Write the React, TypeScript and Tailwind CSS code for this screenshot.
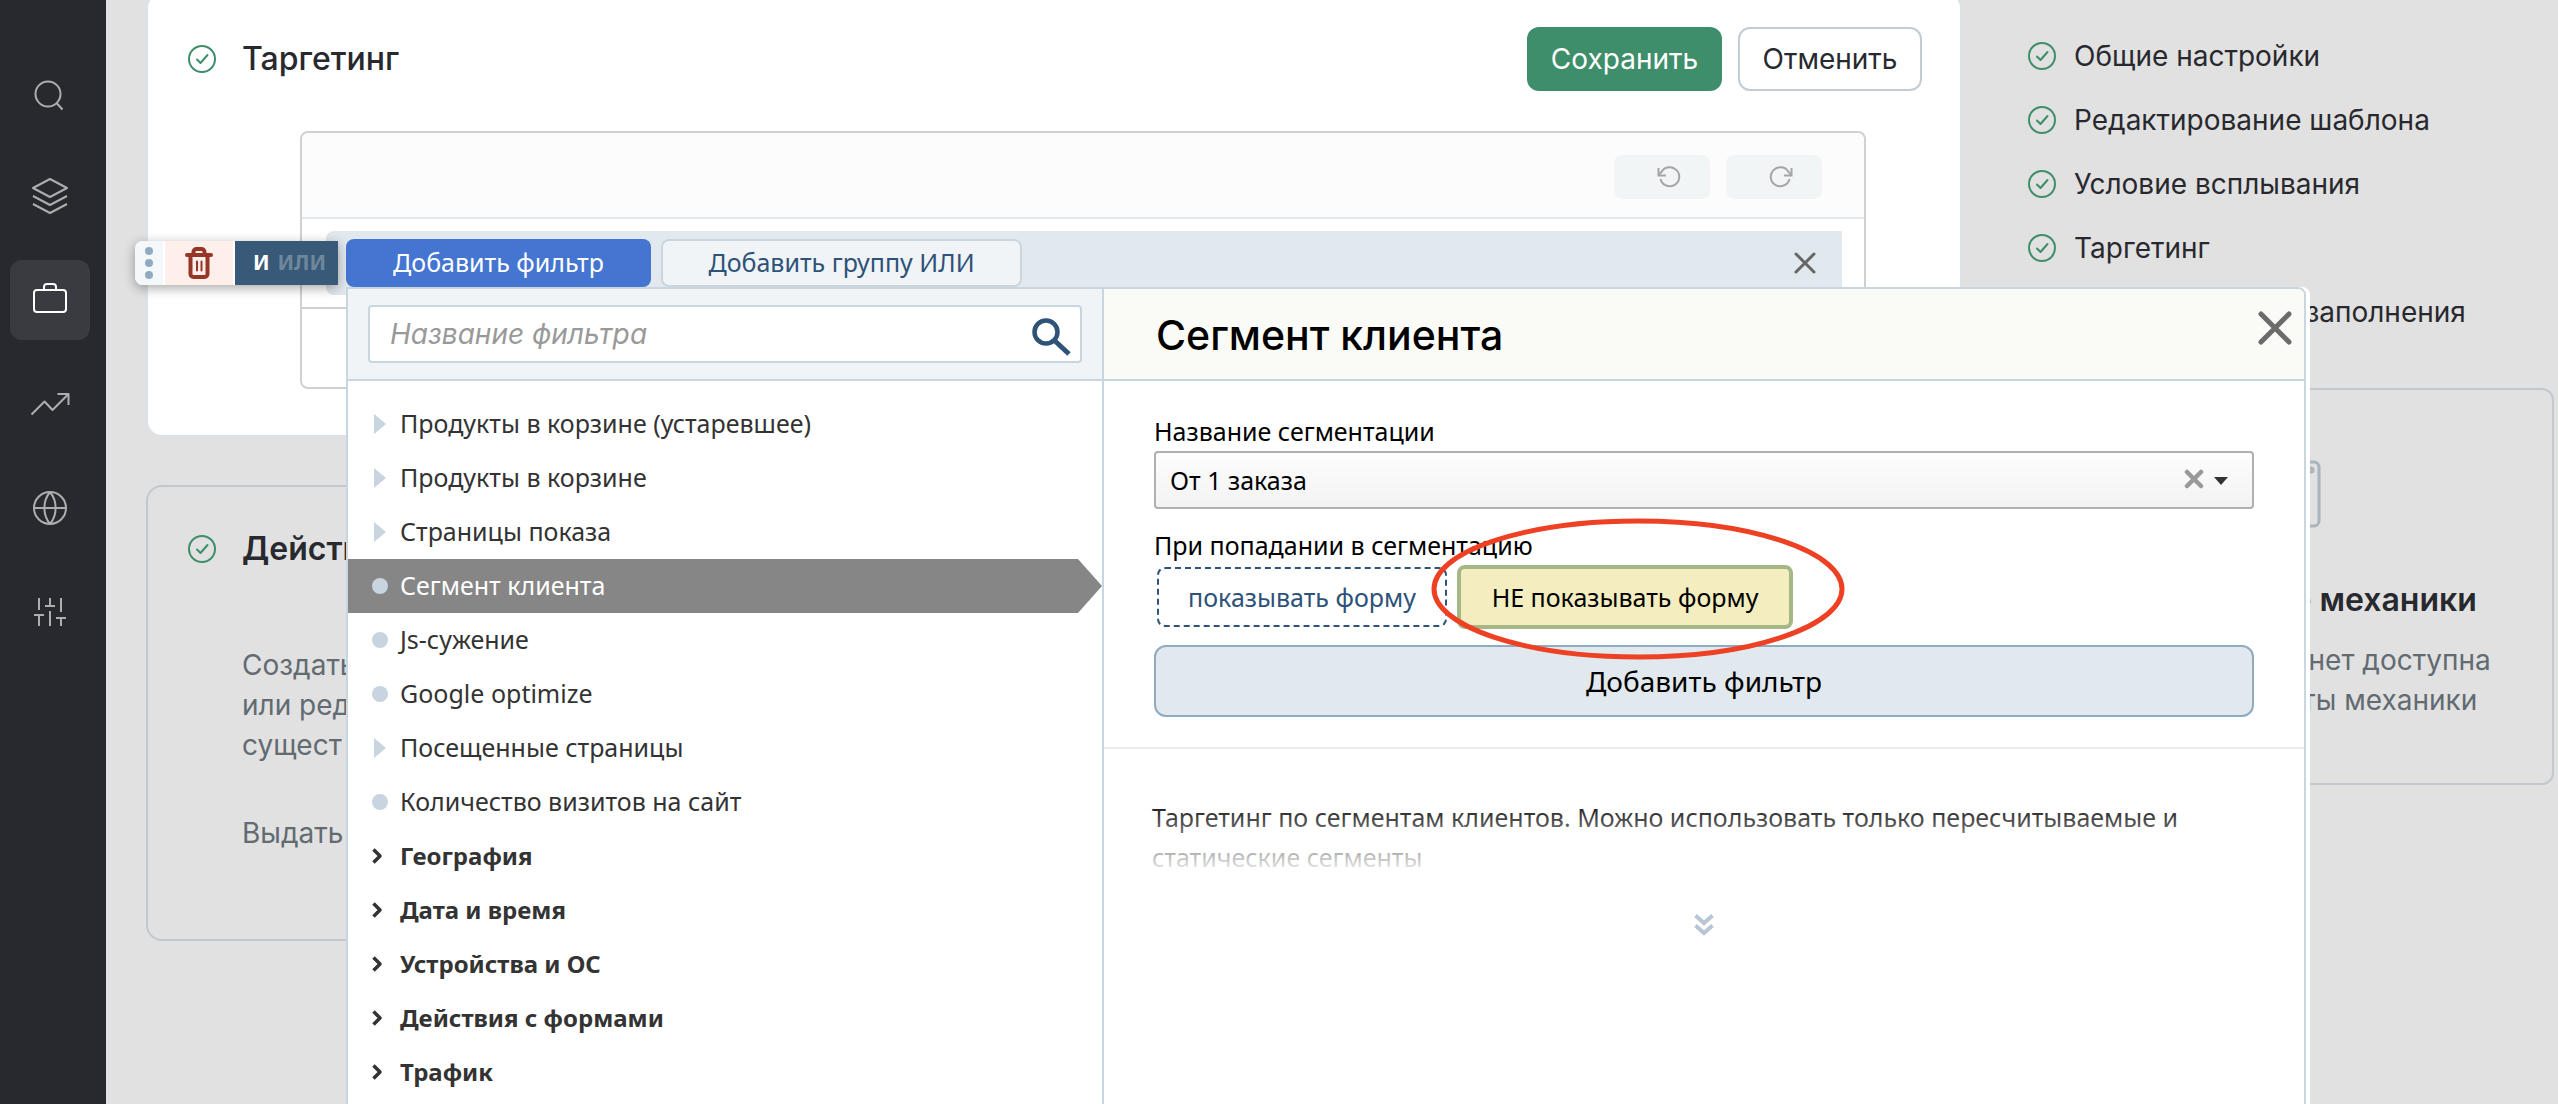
import React, { useState } from 'react';
import clsx from 'clsx';

type FilterItem = {
  title: string;
  kind: 'branch' | 'leaf' | 'group';
};

const filters: FilterItem[] = [
  { title: 'Продукты в корзине (устаревшее)', kind: 'branch' },
  { title: 'Продукты в корзине', kind: 'branch' },
  { title: 'Страницы показа', kind: 'branch' },
  { title: 'Сегмент клиента', kind: 'leaf' },
  { title: 'Js-сужение', kind: 'leaf' },
  { title: 'Google optimize', kind: 'leaf' },
  { title: 'Посещенные страницы', kind: 'branch' },
  { title: 'Количество визитов на сайт', kind: 'leaf' },
  { title: 'География', kind: 'group' },
  { title: 'Дата и время', kind: 'group' },
  { title: 'Устройства и ОС', kind: 'group' },
  { title: 'Действия с формами', kind: 'group' },
  { title: 'Трафик', kind: 'group' },
];

const steps = [
  'Общие настройки',
  'Редактирование шаблона',
  'Условие всплывания',
  'Таргетинг',
  'Действие после заполнения',
];

const menu = [
  {
    label: 'Поиск',
    icon: (
      <>
        <circle cx="18" cy="22" r="12.5" />
        <path d="M26.500 31l6 6.500" />
      </>
    ),
  },
  {
    label: 'Шаблоны',
    icon: (
      <>
        <path d="M20 3l17 9-17 9-17-9z" />
        <path d="M3 20l17 9 17-9" />
        <path d="M3 28l17 9 17-9" />
      </>
    ),
  },
  {
    label: 'Кампании',
    icon: (
      <>
        <rect x="4" y="10" width="32" height="22" rx="3" />
        <path d="M14 10V7a3 3 0 0 1 3-3h6a3 3 0 0 1 3 3v3" />
      </>
    ),
  },
  {
    label: 'Отчеты',
    icon: (
      <>
        <path d="M1.500 30.500l13-13 8 8.500L38.500 10" />
        <path d="M27.500 10h11v11" />
      </>
    ),
  },
  {
    label: 'Интеграции',
    icon: (
      <>
        <circle cx="20" cy="20" r="16" />
        <path d="M4 20h32" />
        <path d="M20 4c-7.500 9-7.500 23 0 32M20 4c7.500 9 7.500 23 0 32" />
      </>
    ),
  },
  {
    label: 'Настройки',
    icon: (
      <>
        <path d="M9 6v12M9 23v11M4 23h10" />
        <path d="M20 6v8M15 14h10M20 19v15" />
        <path d="M31 6v14M31 26v8M26 26h10" />
      </>
    ),
  },
];

function CheckCircle() {
  return (
    <svg className="size-7 shrink-0" viewBox="0 0 28 28" fill="none" stroke="#3e8e6b" strokeWidth="2" strokeLinecap="round" strokeLinejoin="round">
      <circle cx="14" cy="14" r="13" />
      <path d="M9 14.500l3.500 3.500 7-8" />
    </svg>
  );
}

function Sidebar() {
  return (
    <nav className="w-[106px] shrink-0 bg-[#28292e] pl-2.5 pt-13 flex flex-col gap-6">
      {menu.map((item, i) => (
        <button
          key={item.label}
          aria-label={item.label}
          className={clsx(
            'size-20 rounded-xl flex items-center justify-center',
            i === 2 ? 'bg-[#393b40] text-white' : 'text-[#adaeb0]'
          )}
        >
          <svg className="size-10" viewBox="0 0 40 40" fill="none" stroke="currentColor" strokeWidth="2" strokeLinejoin="round">
            {item.icon}
          </svg>
        </button>
      ))}
    </nav>
  );
}

function GroupToolbar() {
  return (
    <div className="absolute top-2.5 left-[-191px] h-11 flex gap-0.5 bg-white rounded-l-lg shadow-[0_3px_12px_rgba(0,0,0,0.35)]">
      <div className="w-7 bg-[#f5f8fa] rounded-l-lg flex flex-col items-center justify-center gap-1">
        <span className="size-2 rounded-full bg-[#8fabc1]" />
        <span className="size-2 rounded-full bg-[#8fabc1]" />
        <span className="size-2 rounded-full bg-[#8fabc1]" />
      </div>
      <button aria-label="Удалить группу" className="w-[68px] bg-[#feefeb] flex items-center justify-center">
        <svg className="w-7 h-8" viewBox="0 0 28 32" fill="none" stroke="#963626" strokeLinecap="round">
          <path d="M2 8h24" strokeWidth="4" />
          <path d="M8.500 7V5a3 3 0 0 1 3-3h5a3 3 0 0 1 3 3v2" strokeWidth="4" />
          <path d="M5.500 8v19a3 3 0 0 0 3 3h11a3 3 0 0 0 3-3V8" strokeWidth="4" />
          <path d="M12 14.500v9M16.500 14.500v9" strokeWidth="2" />
        </svg>
      </button>
      <button className="w-[103px] pl-1.5 bg-[#385977] flex items-center justify-center gap-2 text-[21px] font-bold text-white">
        <span>И</span>
        <span className="text-[#6e879d]">ИЛИ</span>
      </button>
    </div>
  );
}

function Marker({ kind }: { kind: FilterItem['kind'] }) {
  if (kind === 'leaf') {
    return <span className="size-4 rounded-full bg-[#c8d4e0]" />;
  }
  if (kind === 'branch') {
    return (
      <svg className="w-4 h-5" viewBox="0 0 16 20" fill="#c8d4e0">
        <path d="M2 0l12 10L2 20z" />
      </svg>
    );
  }
  return (
    <svg className="size-4" viewBox="0 0 16 16" fill="none" stroke="#333" strokeWidth="3.500" strokeLinejoin="round">
      <path d="M1.500 1.500L8 8l-6.500 6.500" />
    </svg>
  );
}

function FilterList() {
  const [selected, setSelected] = useState('Сегмент клиента');

  return (
    <div className="w-[756px] shrink-0 border-r-2 border-[#c9d6e0]">
      <div className="relative px-5 py-4 bg-[#f0f4f7] border-b-2 border-[#c9d6e0]">
        <input
          type="text"
          aria-label="Название фильтра"
          placeholder="Название фильтра"
          className="block w-full h-[58px] pl-5 pr-16 bg-white border-2 border-[#c9d6e0] rounded-sm font-['Inter',sans-serif] text-[28px] placeholder:italic placeholder:text-[#999]"
        />
        <svg className="absolute top-7 right-[30px] size-10" viewBox="0 0 40 40" fill="none" stroke="#2e5278">
          <circle cx="14" cy="15" r="11.500" strokeWidth="4.500" />
          <path d="M23 24l14 13" strokeWidth="5" />
        </svg>
      </div>
      <ul className="pt-4">
        {filters.map((item) => {
          const active = item.title === selected;
          return (
            <li key={item.title}>
              <button
                onClick={() => setSelected(item.title)}
                className={clsx(
                  'w-full h-[54px] pl-6 flex items-center gap-3',
                  active ? 'bg-[#868686] text-white [clip-path:polygon(0_0,calc(100%-24px)_0,100%_50%,calc(100%-24px)_100%,0_100%)]' : 'text-[#333]',
                  item.kind === 'group' ? 'text-2xl font-bold' : 'text-[25px]'
                )}
              >
                <Marker kind={item.kind} />
                {item.title}
              </button>
            </li>
          );
        })}
      </ul>
    </div>
  );
}

function FilterSettings() {
  return (
    <div className="flex-1 text-black">
      <div className="h-[92px] pl-[52px] pr-[11px] flex items-center justify-between bg-[#fafaf6] border-b-2 border-[#c9d6e0]">
        <h2 className="pt-1 font-['Inter',sans-serif] text-[41px] font-medium">Сегмент клиента</h2>
        <button aria-label="Закрыть" className="mb-3">
          <svg className="size-9" viewBox="0 0 36 36" stroke="#6b6b6b" strokeWidth="5" strokeLinecap="round">
            <path d="M4 4l28 28M32 4L4 32" />
          </svg>
        </button>
      </div>

      <div className="px-[50px] pt-8 pb-[30px] border-b-2 border-[#ebebeb] text-[25px] leading-9">
        <label htmlFor="segmentation" className="block mb-0.5">Название сегментации</label>
        <div className="relative">
          <select
            id="segmentation"
            className="block w-full h-[58px] pl-3.5 appearance-none border-2 border-[#aeb1b4] rounded bg-linear-to-b from-[#fdfdfd] to-[#f3f3f3]"
          >
            <option>От 1 заказа</option>
          </select>
          <button aria-label="Очистить" className="absolute top-[18px] right-[50px]">
            <svg className="size-5" viewBox="0 0 20 20" stroke="#999" strokeWidth="4.500" strokeLinecap="round">
              <path d="M3 3l14 14M17 3L3 17" />
            </svg>
          </button>
          <svg className="absolute top-[26px] right-[26px] w-3.5 h-2 pointer-events-none" viewBox="0 0 14 8" fill="#333">
            <path d="M0 0h14L7 8z" />
          </svg>
        </div>

        <p className="mt-[18px] mb-0.5">При попадании в сегментацию</p>
        <div className="relative flex items-center gap-2.5 pl-[3px]">
          <button className="w-[290px] h-[60px] border-2 border-dashed border-[#2e5278] rounded-lg text-[#2e5278] bg-white">
            показывать форму
          </button>
          <button className="w-[336px] h-16 border-4 border-[#a5b785] rounded-lg bg-[#f3edbf]">
            НЕ показывать форму
          </button>
          <svg className="absolute left-[277px] top-[-47px] w-[414px] h-[142px] pointer-events-none" viewBox="0 0 414 142" fill="none">
            <ellipse cx="207" cy="71" rx="204" ry="68" stroke="#ee4023" strokeWidth="5" />
          </svg>
        </div>

        <button className="mt-4 w-full h-[72px] border-2 border-[#8fabc1] rounded-xl bg-[#e1e8ee] text-[28px]">
          Добавить фильтр
        </button>
      </div>

      <div className="px-12 pt-12 flex flex-col items-center">
        <div className="relative w-full text-[25px] leading-10">
          <p>Таргетинг по сегментам клиентов. Можно использовать только пересчитываемые и статические сегменты</p>
          <div className="absolute inset-0 bg-linear-to-b from-white/0 to-white" />
        </div>
        <button aria-label="Развернуть описание" className="mt-9">
          <svg className="w-5 h-6" viewBox="0 0 20 24" fill="none" stroke="#b8c6d3" strokeWidth="4">
            <path d="M1.500 2.500L10 10l8.500-7.500M1.500 12.500L10 20l8.500-7.500" />
          </svg>
        </button>
      </div>
    </div>
  );
}

function FilterPopup() {
  return (
    <div className="absolute z-10 top-14 left-5 right-[-468px] min-h-[860px] pr-1 flex bg-white rounded-tr-lg">
      <div className="flex-1 flex border-2 border-[#c9d6e0] rounded-tr-lg overflow-hidden bg-white">
        <FilterList />
        <FilterSettings />
      </div>
    </div>
  );
}

function FilterEditor() {
  return (
    <div className="mt-10 ml-28 mr-14 border-2 border-[#d0d0d0] rounded-lg">
      <div className="h-[86px] pt-[22px] pr-[42px] flex justify-end gap-4 bg-[#fcfcfc] border-b-2 border-[#e1e8ee] rounded-t-lg">
        <button aria-label="Отменить действие" className="w-24 h-11 pl-3.5 flex items-center justify-center bg-[#f1f5f6] rounded-lg">
          <svg className="size-6" viewBox="0 0 24 24" fill="none" stroke="#a5a5a5" strokeWidth="2">
            <path d="M3.500 14a9.500 9.500 0 1 0 1-7L2 9.500" />
            <path d="M1.500 3v7.500h7.500" />
          </svg>
        </button>
        <button aria-label="Повторить действие" className="w-24 h-11 pl-3.5 flex items-center justify-center bg-[#f1f5f6] rounded-lg">
          <svg className="size-6" viewBox="0 0 24 24" fill="none" stroke="#a5a5a5" strokeWidth="2">
            <path d="M20.500 14a9.500 9.500 0 1 1-1-7L22 9.500" />
            <path d="M22.500 3v7.500h-7.500" />
          </svg>
        </button>
      </div>

      <div className="py-3 pl-6 pr-[22px] font-['Noto_Sans',sans-serif]">
        <div className="relative h-16 pt-2 pl-5 pr-[26px] flex items-start gap-2.5 bg-[#e1e8ee] rounded-l-lg">
          <GroupToolbar />
          <button className="w-[305px] h-12 rounded-lg bg-[#4475d1] text-white text-[25px]">Добавить фильтр</button>
          <button className="w-[361px] h-12 rounded-lg bg-[#f0f4f7] border-2 border-[#c9d6e0] text-[#2e5278] text-[25px]">
            Добавить группу ИЛИ
          </button>
          <button aria-label="Закрыть группу" className="ml-auto h-12">
            <svg className="size-[22px]" viewBox="0 0 22 22" stroke="#666" strokeWidth="3" strokeLinecap="round">
              <path d="M2 2l18 18M20 2L2 20" />
            </svg>
          </button>
          <FilterPopup />
        </div>
      </div>
      <div className="h-20 border-t-2 border-[#d0d0d0]" />
    </div>
  );
}

export default function App() {
  return (
    <div className="flex h-screen overflow-hidden bg-[#e1e1e1] font-['Inter',sans-serif] text-[28px] text-[#28292e]">
      <Sidebar />

      <div className="flex-1 -mt-2 pl-10 pr-1 flex items-start gap-[46px]">
        <main className="flex-1">
          <section className="pt-[33px] pb-[46px] pl-10 pr-[38px] bg-white border-2 border-[#dce3e7] rounded-2xl">
            <div className="h-16 flex items-center gap-[26px]">
              <CheckCircle />
              <h1 className="text-[32px] font-medium">Таргетинг</h1>
              <div className="ml-auto flex gap-4">
                <button className="w-[195px] h-16 rounded-xl bg-[#3e8e6b] text-white">Сохранить</button>
                <button className="w-[184px] h-16 rounded-xl bg-white border-2 border-[#c2ccd5]">Отменить</button>
              </div>
            </div>
            <FilterEditor />
          </section>

          <section className="mt-12 pt-[42px] pb-[86px] pl-10 border-2 border-[#c2c8cd] rounded-2xl">
            <div className="flex items-center gap-[26px]">
              <CheckCircle />
              <h2 className="text-[32px] leading-10 font-semibold">Действие</h2>
            </div>
            <div className="pl-[54px] leading-10 text-[#626b72]">
              <p className="mt-[76px]">
                Создать
                <br />
                или редак
                <br />
                сущест
              </p>
              <p className="mt-12">Выдать</p>
            </div>
          </section>
        </main>

        <aside className="w-[546px] pt-8">
          <ul className="pl-5">
            {steps.map((step) => (
              <li key={step}>
                <a href="#" className="h-16 flex items-center gap-[18px]">
                  <CheckCircle />
                  {step}
                </a>
              </li>
            ))}
          </ul>

          <section className="mt-11 pt-[70px] pb-[63px] flex flex-col items-center text-center border-2 border-[#c2c8cd] rounded-xl">
            <svg className="w-20 h-[68px]" viewBox="0 0 80 68" fill="none" stroke="#a9b4bc" strokeWidth="3">
              <rect x="2" y="2" width="76" height="64" rx="5" />
              <circle cx="70" cy="10" r="2" />
            </svg>
            <h3 className="mt-[52px] text-[32px] leading-10 font-semibold">Тестирование механики</h3>
            <p className="mt-5 leading-10 text-[#626b72]">
              После старта станет доступна
              <br />
              настройка работы механики
            </p>
          </section>
        </aside>
      </div>
    </div>
  );
}
